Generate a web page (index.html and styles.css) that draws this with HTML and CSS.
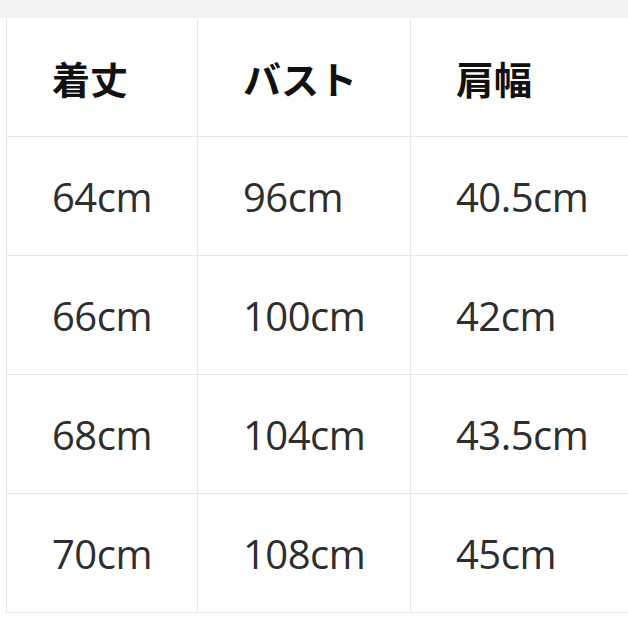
FILE: index.html
```html
<!DOCTYPE html>
<html lang="ja">
<head>
<meta charset="utf-8">
<link rel="stylesheet" href="styles.css">
</head>
<body>
<div class="topbar"></div>
<div class="table">
  <div class="cell head">着丈</div>
  <div class="cell head">バスト</div>
  <div class="cell head">肩幅</div>
  <div class="cell">64cm</div>
  <div class="cell">96cm</div>
  <div class="cell">40.5cm</div>
  <div class="cell">66cm</div>
  <div class="cell">100cm</div>
  <div class="cell">42cm</div>
  <div class="cell">68cm</div>
  <div class="cell">104cm</div>
  <div class="cell">43.5cm</div>
  <div class="cell">70cm</div>
  <div class="cell">108cm</div>
  <div class="cell">45cm</div>
</div>
</body>
</html>
```
FILE: styles.css
```css
html, body {
  margin: 0;
  padding: 0;
  background: #ffffff;
}
body {
  width: 628px;
  height: 628px;
  overflow: hidden;
  font-family: "Open Sans", "Noto Sans CJK JP", sans-serif;
}
.topbar {
  height: 18px;
  background: #f2f3f5;
}
.table {
  margin-left: 6px;
  display: grid;
  grid-template-columns: 191px 213px 240px;
  grid-auto-rows: 119px;
  border-left: 1px solid #e6e6e6;
}
.cell {
  display: flex;
  align-items: center;
  padding-left: 45px;
  border-right: 1px solid #e8e8e8;
  border-bottom: 1px solid #e6e6e6;
  font-size: 40px;
  color: #2e2e2e;
  letter-spacing: -0.5px;
}
.head {
  font-family: "Noto Sans CJK JP", sans-serif;
  font-weight: 700;
  color: #111111;
  font-size: 38px;
  letter-spacing: 0;
}
```
